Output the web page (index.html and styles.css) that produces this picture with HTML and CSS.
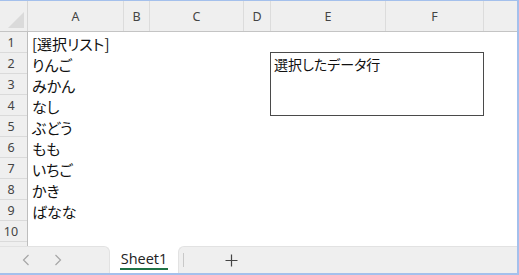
FILE: index.html
```html
<!DOCTYPE html>
<html lang="ja">
<head>
<meta charset="utf-8">
<link rel="stylesheet" href="styles.css">
</head>
<body>
<div class="window">
  <div class="sheet">
    <div class="colhead">
      <div class="corner"><span class="tri"></span></div>
      <div class="ch w-a">A</div>
      <div class="ch w-b">B</div>
      <div class="ch w-c">C</div>
      <div class="ch w-d">D</div>
      <div class="ch w-e">E</div>
      <div class="ch w-f">F</div>
      <div class="ch w-g"></div>
    </div>
    <div class="body">
      <div class="rowheads">
        <div class="rh">1</div><div class="rh">2</div><div class="rh">3</div><div class="rh">4</div><div class="rh">5</div>
        <div class="rh">6</div><div class="rh">7</div><div class="rh">8</div><div class="rh">9</div><div class="rh">10</div>
        <div class="rh"></div>
      </div>
      <div class="cells">
        <div class="cell">[選択リスト]</div>
        <div class="cell">りんご</div>
        <div class="cell">みかん</div>
        <div class="cell">なし</div>
        <div class="cell">ぶどう</div>
        <div class="cell">もも</div>
        <div class="cell">いちご</div>
        <div class="cell">かき</div>
        <div class="cell">ばなな</div>
        <div class="cell"></div>
      </div>
      <div class="textbox">選択したデータ行</div>
    </div>
    <div class="tabbar">
      <div class="nav">
        <svg class="arrow" width="8" height="12" viewBox="0 0 8 12"><path d="M6.5 1 L1.5 6 L6.5 11" fill="none" stroke="#a6a6a6" stroke-width="1.2"/></svg>
        <svg class="arrow" width="8" height="12" viewBox="0 0 8 12"><path d="M1.5 1 L6.5 6 L1.5 11" fill="none" stroke="#a6a6a6" stroke-width="1.2"/></svg>
      </div>
      <div class="tab"><span class="tabname">Sheet1</span></div>
      <div class="rest">
        <span class="sep"></span>
        <svg class="plus" width="13" height="13" viewBox="0 0 13 13"><path d="M6.5 0.5 V12.5 M0.5 6.5 H12.5" fill="none" stroke="#444" stroke-width="1.2"/></svg>
      </div>
    </div>
  </div>
</div>
</body>
</html>
```

FILE: styles.css
```css
* { box-sizing: border-box; }
html, body { margin: 0; padding: 0; background: #fff; }
.window {
  width: 519px;
  height: 275px;
  border-top: 1px solid #a4c0ec;
  border-right: 2px solid #a4c0ec;
  border-bottom: 2px solid #a4c0ec;
  overflow: hidden;
}
.sheet {
  display: flex;
  flex-direction: column;
  height: 100%;
}
.colhead {
  display: flex;
  height: 31px;
  flex: none;
  background: #efefef;
  border-bottom: 1px solid #c4c4c4;
  font-family: "Noto Sans", "Open Sans", sans-serif;
  font-size: 12.5px;
  color: #444;
}
.corner {
  width: 28px;
  flex: none;
  position: relative;
  border-right: 1px solid #d6d6d6;
}
.tri {
  position: absolute;
  right: 3px;
  bottom: 3px;
  width: 0;
  height: 0;
  border-left: 16px solid transparent;
  border-bottom: 16px solid #dadada;
}
.ch {
  flex: none;
  display: flex;
  align-items: center;
  justify-content: center;
  border-right: 1px solid #dcdcdc;
  padding-top: 1px;
}
.w-a { width: 96px; }
.w-b { width: 26px; }
.w-c { width: 94px; }
.w-d { width: 27px; }
.w-e { width: 115px; }
.w-f { width: 98px; }
.w-g { flex: 1; border-right: none; }
.body {
  position: relative;
  display: flex;
  height: 214px;
  flex: none;
  overflow: hidden;
}
.rowheads {
  width: 28px;
  flex: none;
  background: #efefef;
  border-right: 1px solid #bdbdbd;
  font-family: "Noto Sans", "Open Sans", sans-serif;
  font-size: 12.5px;
  color: #444;
}
.rh {
  height: 21px;
  border-bottom: 1px solid #dadada;
  display: flex;
  align-items: center;
  justify-content: center;
  padding-right: 5px;
}
.cells {
  flex: 1;
  font-family: "Noto Sans CJK JP", sans-serif;
  font-size: 15px;
  color: #111;
  font-feature-settings: "palt";
}
.cell {
  height: 21px;
  padding-left: 4px;
  display: flex;
  align-items: center;
  padding-top: 1px;
}
.textbox {
  position: absolute;
  left: 270px;
  top: 20px;
  width: 214px;
  height: 64px;
  border: 1.5px solid #4a4a4a;
  background: #fff;
  padding: 2px 3px;
  font-family: "Noto Sans CJK JP", sans-serif;
  font-size: 14px;
  line-height: 19px;
  color: #111;
  font-feature-settings: "palt";
}
.tabbar {
  flex: 1;
  display: flex;
  background: #fff;
}
.nav {
  width: 110px;
  flex: none;
  background: #efefef;
  border-top: 1px solid #e2e2e2;
  border-right: 1px solid #e2e2e2;
  border-top-right-radius: 6px;
  display: flex;
  align-items: center;
  padding-left: 22px;
  gap: 24px;
}
.tab {
  width: 68px;
  flex: none;
  display: flex;
  align-items: center;
  justify-content: center;
}
.tabname {
  font-family: "Open Sans", "Noto Sans", sans-serif;
  font-size: 14.5px;
  color: #222;
  border-bottom: 2px solid #1e7145;
  line-height: 18px;
  padding: 0 1px;
  margin-top: 1px;
}
.rest {
  flex: 1;
  background: #efefef;
  border-top: 1px solid #e2e2e2;
  border-left: 1px solid #e2e2e2;
  border-top-left-radius: 6px;
  display: flex;
  align-items: center;
  padding-left: 4px;
}
.sep {
  width: 1px;
  height: 14px;
  background: #c8c8c8;
}
.plus {
  margin-left: 41px;
}
```
